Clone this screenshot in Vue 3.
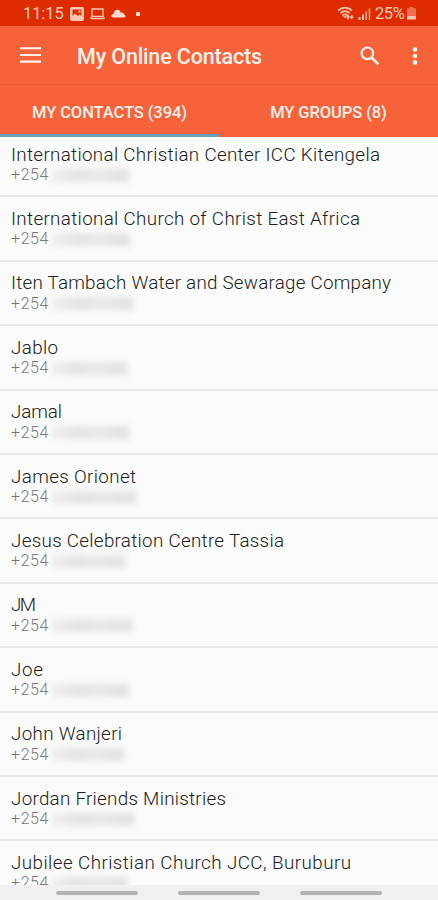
<script setup>
// name, drawn width of the name, right edge of the masked number
const contacts = [
  ['International Christian Center ICC Kitengela', 369, 129],
  ['International Church of Christ East Africa', 349, 130],
  ['Iten Tambach Water and Sewarage Company', 380, 133],
  ['Jablo', 47, 127],
  ['Jamal', 51, 129],
  ['James Orionet', 125, 136],
  ['Jesus Celebration Centre Tassia', 273, 125],
  ['JM', 25, 132],
  ['Joe', 32, 129],
  ['John Wanjeri', 111, 124],
  ['Jordan Friends Ministries', 215, 134],
  ['Jubilee Christian Church JCC, Buruburu', 340, 127]
].map(([name, width, edge]) => ({ name, width, edge }))
</script>

<template>
  <div class="screen">
    <header class="status">
      <span class="time">11:15</span>
      <svg class="s-img" width="14" height="14" viewBox="0 0 14 14"><path fill="currentColor" fill-rule="evenodd" d="M2 0h10q2 0 2 2v10q0 2-2 2H2q-2 0-2-2V2Q0 0 2 0ZM2.500 2.500V9L5 6.500 8 9 9.500 7.500 11.500 9V2.500ZM8.500 3.500h2v2h-2Z" /></svg>
      <svg class="s-lap" width="15" height="12" viewBox="0 0 15 12"><path fill="none" stroke="currentColor" stroke-width="1.300" d="M2 1h11v7.500H2ZM.7 10.700h13.600M1.500 8.500.7 11M13.500 8.500l.8 2.500" /></svg>
      <svg class="s-cloud" width="15" height="9" viewBox="0 0 15 9"><path fill="currentColor" d="M2 8.500C-.5 8.500 0 5 2.500 5 3 1.500 5 .5 6.500.8 8.500 1 9.300 2.200 9.600 3.600 11.500 3 13 4 13 5.500 15 6 14.800 8.500 13.500 8.500Z" /></svg>
      <i class="dot"></i>
      <span class="gap"></span>
      <svg class="s-wifi" width="18" height="15" viewBox="0 0 18 15"><g fill="none" stroke="currentColor" stroke-width="1.800"><path d="M1 4.500Q8 -1.300 15 4.500M3.300 7.200Q8 3 12.700 7.200M5.500 9.500Q8 7.200 10.500 9.500" /></g><path fill="currentColor" d="M6.300 10.300h3.400L8 12.500ZM11 8.500l2.200 3h-1.500v2h-1.400v-2H9ZM14.500 13.500l-2-3H14V9h1.400v1.500H17Z" /></svg>
      <svg class="s-sig" width="13" height="12" viewBox="0 0 13 12"><g fill="currentColor"><path d="M.5 9H2.500v3H.5ZM4 6.500h2V12H4Z" /><path d="M7.500 3.500h1.600V12H7.500ZM10.700.5h1.500V12h-1.500Z" opacity=".75" /></g></svg>
      <span class="pct">25%</span>
      <svg class="s-bat" width="9" height="13" viewBox="0 0 9 13"><path fill="currentColor" opacity=".45" d="M2.800 0h3.400v1.300H9V9H0V1.300h2.800Z" /><path fill="currentColor" d="M0 9h9v3.500H0Z" /></svg>
    </header>

    <div class="bar">
      <svg class="menu" width="21" height="16" viewBox="0 0 21 16"><path stroke="currentColor" stroke-width="2.100" d="M0 1.300h21M0 8h21M0 14.600h21" /></svg>
      <h1>My Online Contacts</h1>
      <span class="gap"></span>
      <svg class="search" width="20" height="20" viewBox="0 0 20 20"><circle cx="7.400" cy="7.300" r="5.800" fill="none" stroke="currentColor" stroke-width="2.200" /><path stroke="currentColor" stroke-width="2.600" d="m11.500 11.500 6.800 6.700" /></svg>
      <svg class="more" width="6" height="18" viewBox="0 0 6 18"><g fill="currentColor"><circle cx="3" cy="2.500" r="2.300" /><circle cx="3" cy="9" r="2.300" /><circle cx="3" cy="15.400" r="2.300" /></g></svg>
    </div>

    <nav class="tabs">
      <span class="tab active">MY CONTACTS (394)</span>
      <span class="tab">MY GROUPS (8)</span>
    </nav>

    <main class="list">
      <div class="rows">
        <div v-for="c in contacts" :key="c.name" class="row">
          <svg class="name" width="420" height="24"><text x="0" y="18" :textLength="c.width" lengthAdjust="spacing">{{ c.name }}</text></svg>
          <div class="phone">
            <span class="code">+254</span>
            <span class="mask" :style="{ width: c.edge - 51 + 'px' }"></span>
          </div>
        </div>
      </div>
    </main>

    <footer class="nav"><i></i><i></i><i></i></footer>
  </div>
</template>

<style>
body { margin: 0; }
</style>

<style scoped>
.screen { width: 438px; height: 900px; display: flex; flex-direction: column; overflow: hidden; background: #fbfbfb; font-family: Roboto, sans-serif; }
svg { display: block; flex: none; }
.gap { flex: 1; }
.status { height: 26px; flex: none; box-sizing: border-box; display: flex; align-items: center; padding: 1px 22px 0 23px; background: #de2b00; color: #ffc6b5; font-size: 16.500px; }
.time { width: 41px; letter-spacing: -.1px; white-space: nowrap; }
.s-img { margin-left: 6px; }
.s-lap { margin-left: 6px; }
.s-cloud { margin-left: 6px; color: #ffd9cd; }
.dot { width: 4px; height: 4px; margin-left: 10px; border-radius: 1px; background: #ffe1d8; }
.s-sig { margin: 0 4px 0 3px; }
.pct { width: 31px; letter-spacing: -.4px; white-space: nowrap; }
.s-bat { margin-left: 1px; }
.bar { height: 59px; flex: none; box-sizing: border-box; display: flex; align-items: center; padding: 1px 20px 0; background: #f6633a; color: #fff1eb; border-bottom: 1px solid #e85c38; }
.menu { margin-bottom: 2px; }
h1 { margin: 2px 0 0 36px; font-size: 21.500px; font-weight: 500; line-height: 26px; letter-spacing: -.15px; white-space: nowrap; }
.search { margin: 1px 32px 0 0; }
.tabs { height: 52px; flex: none; display: flex; background: #f6633a; color: #fff1eb; font-size: 16.500px; font-weight: 500; }
.tab { flex: 1; box-sizing: border-box; display: flex; align-items: center; justify-content: center; padding-top: 5px; border-bottom: 3px solid #f6633a; letter-spacing: -.08px; white-space: nowrap; }
.tab.active { border-bottom-color: #6a9fba; }
.list { flex: 1; min-height: 0; overflow: hidden; }
.rows { margin-top: -4px; }
.row { height: 64.400px; box-sizing: border-box; padding: 9.600px 0 0 11px; border-bottom: 2px solid #e9e9e9; }
.name { height: 24px; }
.name text { font-family: Roboto, sans-serif; font-size: 18.800px; font-weight: 300; fill: #202020; }
.phone { display: flex; align-items: center; height: 20px; margin-top: -1.500px; }
.code { width: 40px; color: #777; font-size: 16px; font-weight: 300; line-height: 20px; letter-spacing: .6px; }
.mask { height: 13px; background: linear-gradient(90deg, #efefef, #e3e3e3 35%, #e8e8e8 60%, #e1e1e1); filter: blur(3px); }
.nav { height: 15px; flex: none; display: flex; justify-content: center; align-items: center; gap: 40px; background: #f0f0f0; }
.nav i { width: 82px; height: 4px; border-radius: 2px; background: #b3b3b3; }
</style>
